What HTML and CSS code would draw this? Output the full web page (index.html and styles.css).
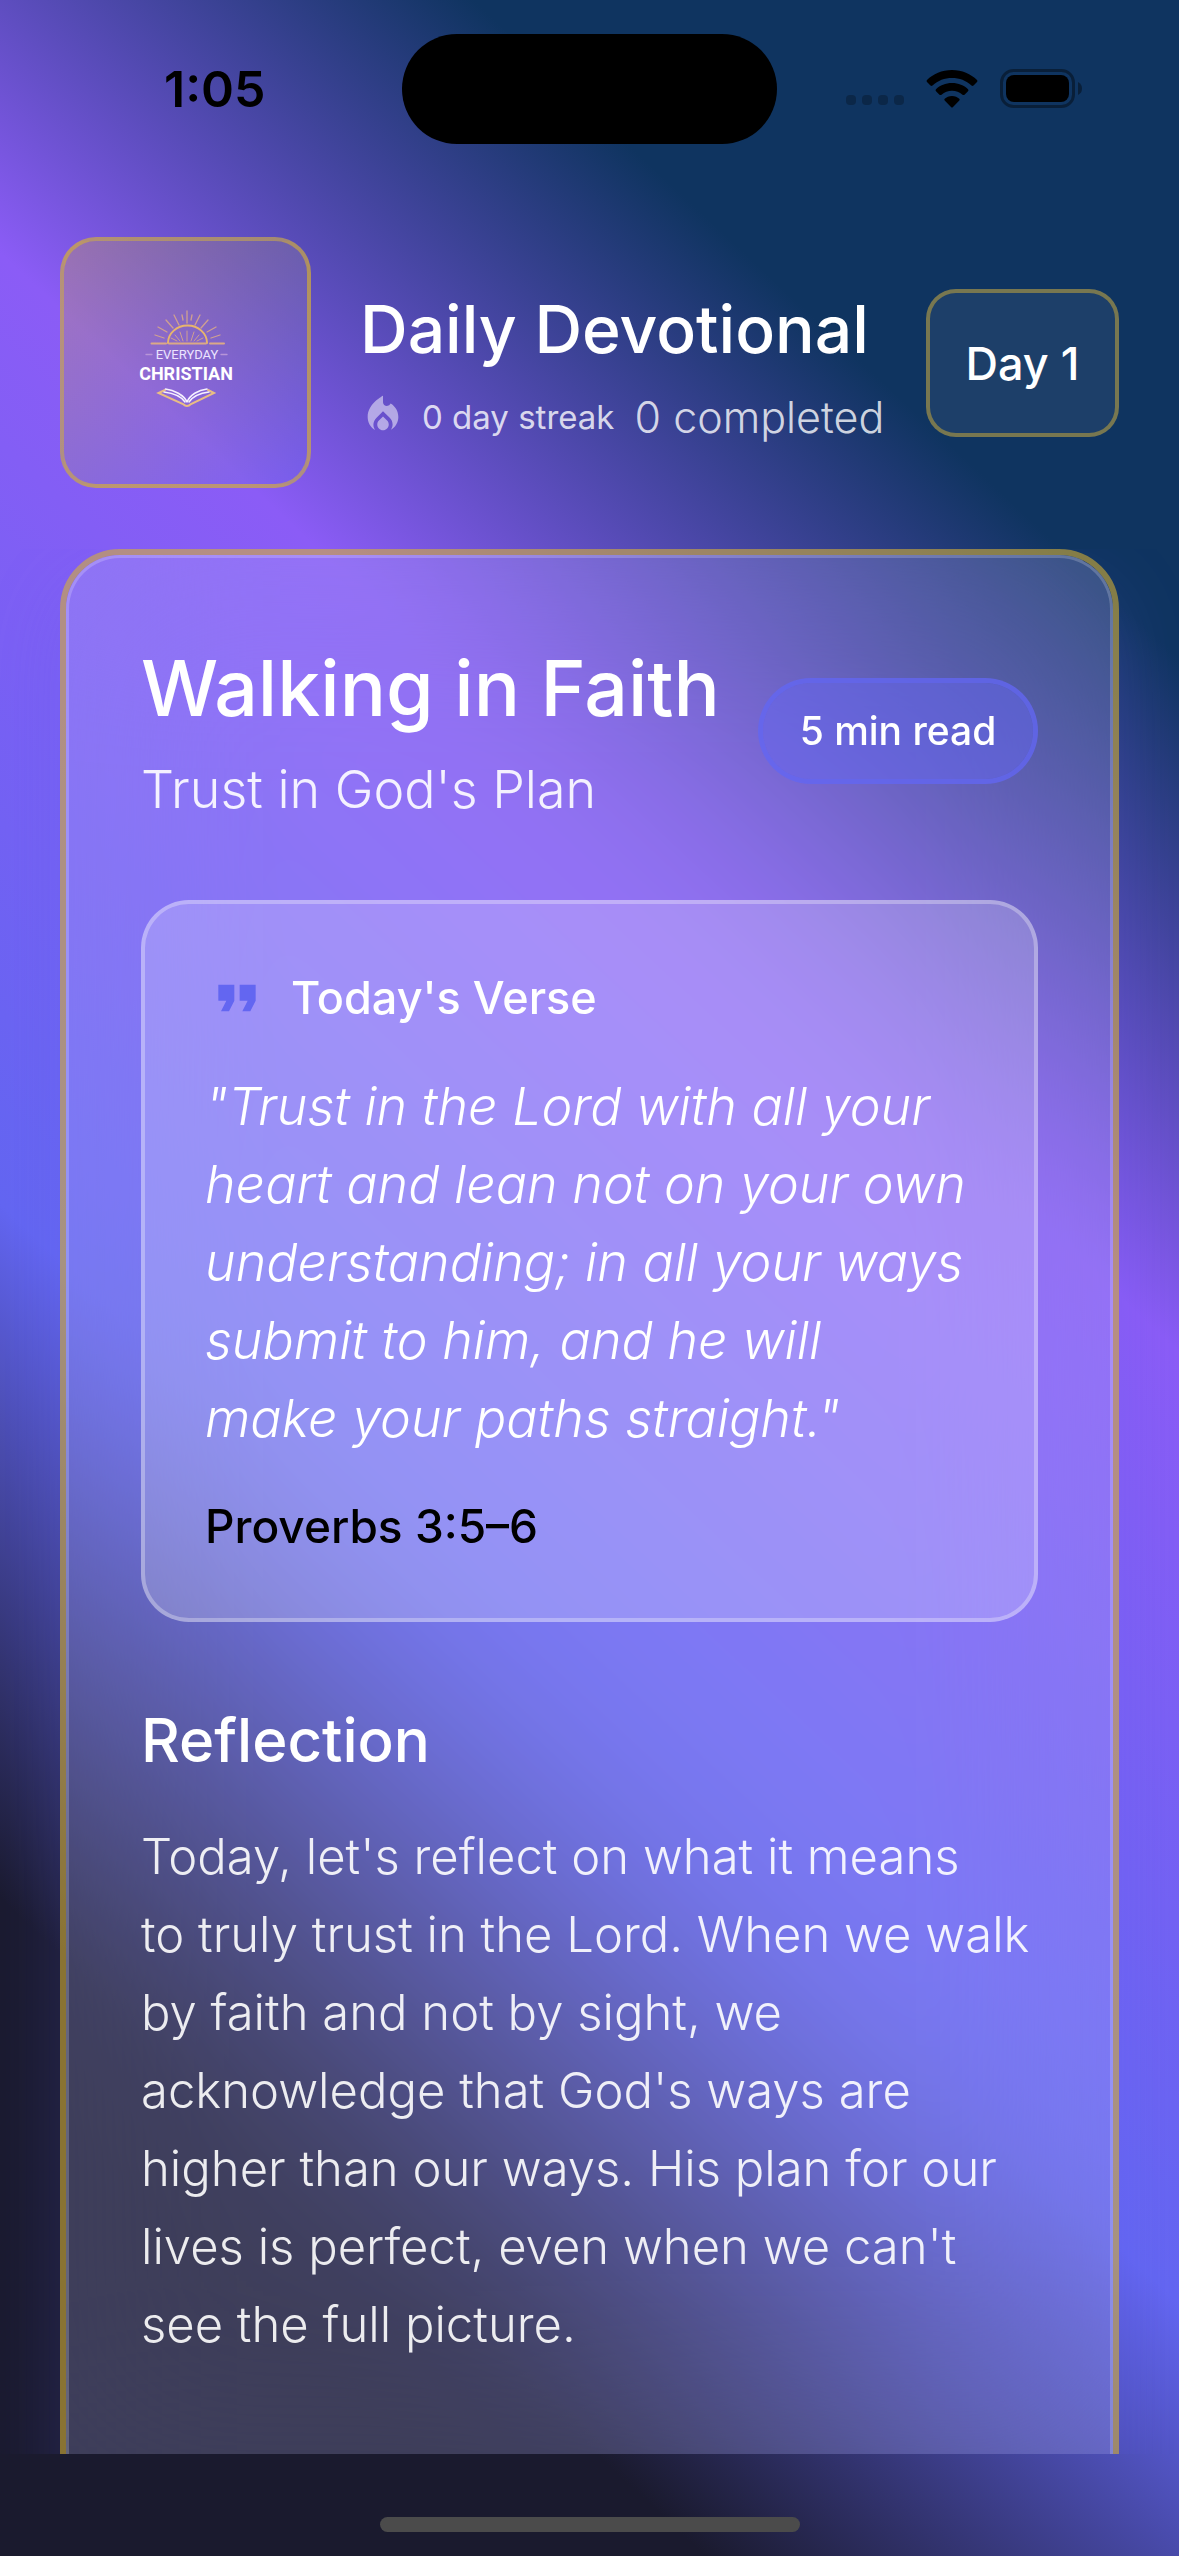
FILE: index.html
```html
<!DOCTYPE html>
<html lang="en">
<head>
<meta charset="utf-8">
<meta name="viewport" content="width=device-width, initial-scale=1">
<title>Daily Devotional</title>
<link rel="stylesheet" href="styles.css">
</head>
<body>
<div class="screen">
  <div class="status-bar">
    <time class="clock">1:05</time>
    <div class="island"></div>
    <div class="indicators">
      <svg class="signal" width="58" height="10" viewBox="0 0 58 10" aria-hidden="true">
        <rect x="0" width="10" height="10" rx="4"/><rect x="16" width="10" height="10" rx="4"/><rect x="32" width="10" height="10" rx="4"/><rect x="48" width="10" height="10" rx="4"/>
      </svg>
      <svg class="wifi" width="52" height="38" viewBox="0 0 52 38" aria-hidden="true">
        <path d="M26 0C36 0 45 4 51 10Q52 11 51 12L47.500 15.500Q46.500 16.300 45.500 15.400C40 10.500 33.500 8 26 8S12 10.500 6.500 15.400Q5.500 16.300 4.500 15.500L1 12Q0 11 1 10C7 4 16 0 26 0Z"/>
        <path d="M26 13C32.500 13 38 15.300 42 19.200Q43 20.200 42 21.200L38.500 24.700Q37.500 25.500 36.500 24.700C33.500 22 30 20.800 26 20.800S18.500 22 15.500 24.700Q14.500 25.500 13.500 24.700L10 21.200Q9 20.200 10 19.200C14 15.300 19.500 13 26 13Z"/>
        <path d="M26 26C29 26 31.500 27.200 33.300 28.800Q34.200 29.700 33.300 30.600L27 37Q26 38 25 37L18.700 30.600Q17.800 29.700 18.700 28.800C20.500 27.200 23 26 26 26Z"/>
      </svg>
      <svg class="battery" width="83" height="40" viewBox="0 0 83 40" aria-hidden="true">
        <rect x="1.500" y="1.500" width="72" height="36" rx="12" fill="none" stroke="#000" stroke-opacity=".4" stroke-width="3"/>
        <rect x="6" y="6" width="63" height="27" rx="8"/>
        <path d="M78 13Q82 15 82 19.500T78 26Z" fill-opacity=".4"/>
      </svg>
    </div>
  </div>

  <header class="header">
    <div class="logo">
      <svg width="96" height="106" viewBox="0 0 96 106" role="img" aria-label="Everyday Christian">
        <g fill="none" stroke="#cfa091" stroke-width="1.300" stroke-linecap="round">
          <path d="M30 33A19.500 17.500 0 0 1 69 33" stroke="#e8b56c" stroke-width="2"/>
          <path d="M13.500 33.500H28M72 33.500H86M31 33.500H68" stroke="#dba986" stroke-width="2"/>
          <path d="M49 1V13M36 5L41 15M62 5L57 15M44 5L45 10M54 5L53 10M28 10L35 18M70 10L63 18M20 17L29 22M78 17L69 22M17 25L26 28M82 25L73 28"/>
          <path d="M49 31V21M45 31L42 22M53 31L56 22M42 31L37 25M56 31L61 25M39 31L33 28M59 31L65 28" stroke-width="1"/>
          <path d="M27 80L20.500 83L45 94Q49 98 53 94L76 83L70 80" stroke="#e9bd84" stroke-width="2"/>
          <path d="M49 92C46 85 36 80 27.500 79M49 92C52 85 60 80 69 79M47 92C43 86 34 83 26 82M51 92C55 86 63 83 71 82" stroke="#f6f1ff" stroke-width="1.500"/>
          <path d="M8 44.500H14M83 44.500H89" stroke="#b795d8"/>
        </g>
        <text class="logo-top" x="49" y="49" text-anchor="middle">EVERYDAY</text>
        <text class="logo-name" x="48" y="70" text-anchor="middle">CHRISTIAN</text>
      </svg>
    </div>
    <div class="heading">
      <h1>Daily Devotional</h1>
      <div class="stats">
        <svg class="flame" width="46" height="46" viewBox="0 0 24 24" aria-hidden="true"><path d="M16 6l-.44.55C14.380 8.020 12 7.190 12 5.300V2c0 0-8 4-8 11 0 2.920 1.560 5.470 3.890 6.860C7.330 19.070 7 18.110 7 17.090c0-1.340.53-2.610 1.520-3.560L12 10l3.500 3.460C16.470 14.410 17 15.670 17 17c0 1.010-.33 1.970-.88 2.760C18.400 18.380 20 15.870 20 13 20 10.020 18.380 7.380 16 6zM12 12.800l-2.120 2.080C9.310 15.440 9 16.200 9 17c0 1.650 1.350 3 3 3s3-1.350 3-3c0-.8-.31-1.550-.88-2.110L12 12.800z"/></svg>
        <span class="streak">0 day streak</span>
        <span class="completed">0 completed</span>
      </div>
    </div>
    <div class="day">Day 1</div>
  </header>

  <main class="viewport">
    <article class="card">
      <div class="card-inner">
        <div class="title-row">
          <div>
            <h2>Walking in Faith</h2>
            <p class="subtitle">Trust in God's Plan</p>
          </div>
          <span class="pill">5 min read</span>
        </div>
        <section class="verse">
          <h3><svg width="64" height="64" viewBox="0 0 24 24" aria-hidden="true"><path d="M6 17h3l2-4V7H5v6h3zm8 0h3l2-4V7h-6v6h3z"/></svg>Today's Verse</h3>
          <blockquote>"Trust in the Lord with all your<br>heart and lean not on your own<br>understanding; in all your ways<br>submit to him, and he will<br>make your paths straight."</blockquote>
          <cite>Proverbs 3:5–6</cite>
        </section>
        <section class="reflection">
          <h3>Reflection</h3>
          <p>Today, let's reflect on what it means<br>to truly trust in the Lord. When we walk<br>by faith and not by sight, we<br>acknowledge that God's ways are<br>higher than our ways. His plan for our<br>lives is perfect, even when we can't<br>see the full picture.</p>
        </section>
      </div>
    </article>
  </main>
  <footer class="home-area"><div class="home-bar"></div></footer>
</div>
</body>
</html>
```
FILE: styles.css
```css
* { box-sizing: border-box; margin: 0; padding: 0; }

body {
  font-family: Inter, "Open Sans", sans-serif;
  color: #fff;
}

.screen {
  height: 100vh;
  overflow: hidden;
  display: flex;
  flex-direction: column;
  background: linear-gradient(223deg, #0f3460 18%, #8b5cf6 37%, #6366f1 63%, #1a1a2e 82%);
}

.status-bar {
  flex: none;
  display: grid;
  grid-template-columns: 1fr 375px 1fr;
  align-items: center;
  height: 144px;
  padding-top: 34px;
  color: #000;
}
.clock { font-size: 50px; font-weight: 600; line-height: 56px; padding-left: 164px; }
.island { height: 110px; border-radius: 55px; background: #000; }
.indicators { display: flex; align-items: center; padding-left: 69px; gap: 22px; }
.signal { fill-opacity: .25; align-self: flex-end; margin-bottom: 4px; }

.header {
  flex: none;
  display: flex;
  align-items: center;
  padding: 93px 60px 61px;
}
.logo {
  flex: none;
  display: grid;
  place-items: center;
  width: 251px;
  height: 251px;
  border: 4px solid rgba(212, 175, 55, .6);
  border-radius: 36px;
  background: linear-gradient(135deg, rgba(212, 175, 55, .3), rgba(99, 102, 241, .3));
}
.logo-top { font: 400 13px "Liberation Sans Narrow", Roboto, sans-serif; fill: #ece4ff; }
.logo-name { font: 700 18px "Liberation Sans Narrow", Roboto, sans-serif; fill: #fff; }
.heading { flex: 1; padding: 10px 0 0 49px; white-space: nowrap; }
h1 { font-size: 66px; font-weight: 500; line-height: 86px; }
.stats { display: flex; align-items: center; height: 66px; margin-top: 12px; }
.flame { fill: #fff; fill-opacity: .5; margin-bottom: 4px; }
.streak { font-size: 33px; margin-left: 16px; color: rgba(255, 255, 255, .8); }
.completed { font-size: 43px; font-weight: 300; margin-left: 20px; color: rgba(255, 255, 255, .8); }
.day {
  flex: none;
  width: 193px;
  height: 148px;
  line-height: 142px;
  text-align: center;
  font-size: 45px;
  font-weight: 500;
  border: 4px solid rgba(212, 175, 55, .5);
  border-radius: 30px;
  background: rgba(255, 255, 255, .06);
}

.viewport { flex: 1; min-height: 0; overflow: hidden; padding: 0 60px; }
.card {
  border: 6px solid rgba(212, 175, 55, .6);
  border-radius: 60px;
  box-shadow: 0 30px 80px rgba(99, 102, 241, .2);
}
.card-inner {
  height: 2000px;
  border: 3px solid rgba(255, 255, 255, .2);
  border-radius: 54px;
  background:
    linear-gradient(rgba(255, 255, 255, .13), rgba(255, 255, 255, .13)),
    rgba(99, 102, 241, .1);
  backdrop-filter: blur(90px);
  padding: 78px 72px;
}
.title-row { display: flex; align-items: center; justify-content: space-between; white-space: nowrap; }
h2 { font-size: 77px; font-weight: 500; line-height: 104px; }
.subtitle { margin-top: 14px; font-size: 52px; font-weight: 300; line-height: 72px; color: rgba(255, 255, 255, .9); }
.pill {
  width: 280px;
  height: 106px;
  line-height: 96px;
  text-align: center;
  font-size: 39px;
  font-weight: 500;
  border: 5px solid rgba(99, 102, 241, .8);
  border-radius: 53px;
  background: rgba(99, 102, 241, .5);
  background-clip: padding-box;
}
.verse {
  margin-top: 74px;
  border: 4px solid rgba(255, 255, 255, .3);
  border-radius: 48px;
  background: rgba(255, 255, 255, .2);
  padding: 62px 60px 60px;
  white-space: nowrap;
}
.verse h3 { display: flex; align-items: center; gap: 22px; font-size: 45px; font-weight: 500; line-height: 64px; }
.verse svg { fill: #6366f1; }
blockquote { margin-top: 38px; font-size: 52px; font-weight: 300; font-style: italic; line-height: 78px; }
cite { display: block; margin-top: 36px; font-size: 46px; font-weight: 500; font-style: normal; line-height: 64px; color: #000; }
.reflection { margin-top: 82px; white-space: nowrap; }
.reflection h3 { font-size: 60px; font-weight: 500; line-height: 72px; }
.reflection p { margin-top: 42px; font-size: 49px; font-weight: 300; line-height: 78px; color: rgba(255, 255, 255, .9); }

.home-area { flex: none; height: 102px; display: flex; justify-content: center; align-items: flex-end; padding-bottom: 24px; }
.home-bar { width: 420px; height: 15px; border-radius: 8px; background: #4b4b4b; }
```
